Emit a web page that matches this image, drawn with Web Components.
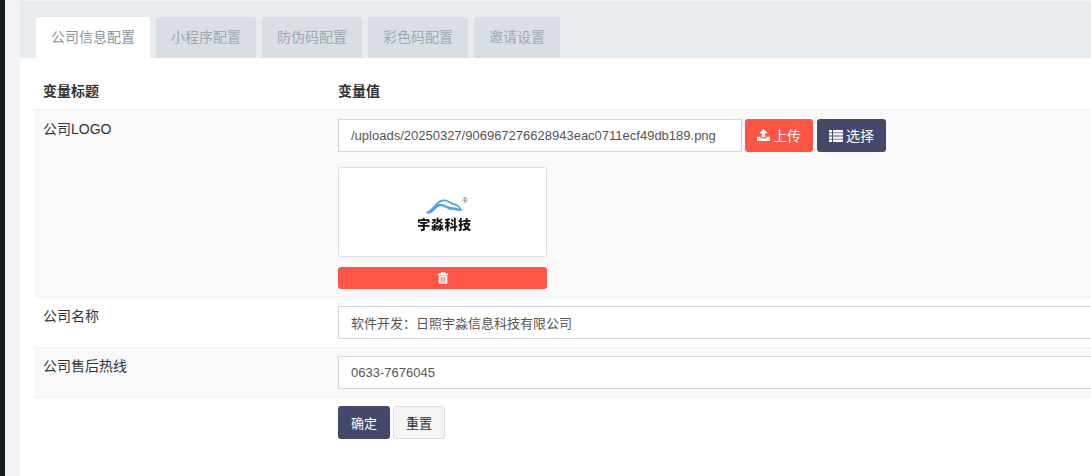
<!DOCTYPE html>
<html lang="zh">
<head>
<meta charset="utf-8">
<title>系统配置</title>
<style>
html, body { margin: 0; height: 100%; overflow: hidden; background: #f1f4f6; }
body { font: 14px "Liberation Sans", "Noto Sans CJK SC", sans-serif; color: #333; }
</style>
</head>
<body>
<config-page>
  <tab-bar slot="tabs">
    <tab-item active>公司信息配置</tab-item>
    <tab-item>小程序配置</tab-item>
    <tab-item>防伪码配置</tab-item>
    <tab-item>彩色码配置</tab-item>
    <tab-item>邀请设置</tab-item>
  </tab-bar>
  <config-row head>
    <span slot="label">变量标题</span>
    <span>变量值</span>
  </config-row>
  <config-row striped style="--row-height:186px;--row-border:0">
    <span slot="label">公司LOGO</span>
    <upload-field value="/uploads/20250327/906967276628943eac0711ecf49db189.png"></upload-field>
  </config-row>
  <config-row style="--row-height:50px">
    <span slot="label">公司名称</span>
    <text-field value="软件开发：日照宇淼信息科技有限公司"></text-field>
  </config-row>
  <config-row striped closing style="--row-height:51px">
    <span slot="label">公司售后热线</span>
    <text-field value="0633-7676045"></text-field>
  </config-row>
  <form-actions></form-actions>
</config-page>

<script>
// shared icons, drawn on a 14 unit box
const ICONS = {
  upload: '<path d="M7 0 11.4 4.6H8.9V9H5.1V4.6H2.6Z"/><path d="M0 8.4H3.9V10.3H10.1V8.4H14V13H0Z"/>',
  list: '<path d="M0 1H3V3.4H0ZM4 1H14V3.4H4ZM0 4.2H3V6.6H0ZM4 4.2H14V6.6H4ZM0 7.4H3V9.8H0ZM4 7.4H14V9.8H4ZM0 10.6H3V13H0ZM4 10.6H14V13H4Z"/>',
  trash: '<path d="M4.6 .4H9.4L10 2H13V3.4H1V2H4ZM2 4.2H12V13.6H2Z"/><path d="M4.4 5.6H5.4V12.2H4.4ZM6.5 5.6H7.5V12.2H6.5ZM8.6 5.6H9.6V12.2H8.6Z" fill="#ff5546"/>'
};

class ConfigPage extends HTMLElement {
  constructor() {
    super();
    this.attachShadow({ mode: "open" }).innerHTML = `
    <style>
      :host { display: flex; height: 476px; width: 1240px; background: #f0f4f7; }
      .rail { width: 5px; flex: none; background: #141d21; }
      .main { margin: 1px 0 0 15px; flex: 1; background: #fff; }
      .body { padding: 18px 0 0 15px; }
    </style>
    <div class="rail"></div>
    <div class="main">
      <slot name="tabs"></slot>
      <div class="body"><slot></slot></div>
    </div>`;
  }
}

class TabBar extends HTMLElement {
  constructor() {
    super();
    this.attachShadow({ mode: "open" }).innerHTML = `
    <style>
      :host { display: flex; gap: 6px; height: 41px; padding: 16px 0 0 16px; background: #e6ebee; }
    </style>
    <slot></slot>`;
  }
}

class TabItem extends HTMLElement {
  constructor() {
    super();
    this.attachShadow({ mode: "open" }).innerHTML = `
    <style>
      :host { display: block; padding: 0 15px; line-height: 41px; color: #a0a8ae; background: #d8dee3; border-radius: 3px 3px 0 0; }
      :host([active]) { background: #fff; color: #8b959c; }
    </style>
    <slot></slot>`;
  }
}

class ConfigRow extends HTMLElement {
  constructor() {
    super();
    this.attachShadow({ mode: "open" }).innerHTML = `
    <style>
      :host { display: grid; grid-template-columns: 295px 1fr; box-sizing: border-box; height: var(--row-height, 35px); padding: 8px 0 0 8px; border-top: var(--row-border, 1px) solid #f1f2f3; line-height: 20px; }
      :host([striped]) { background: #f9f9f9; }
      :host([closing]) { border-bottom: 1px solid #f1f2f3; }
      :host([head]) { border-top: 0; border-bottom: 2px solid #f1f2f3; padding-top: 5px; font-weight: bold; }
    </style>
    <div><slot name="label"></slot></div>
    <div><slot></slot></div>`;
  }
}

class TextField extends HTMLElement {
  constructor() {
    super();
    const root = this.attachShadow({ mode: "open" });
    root.innerHTML = `
    <style>
      :host { display: block; }
      input { display: block; box-sizing: border-box; width: 100%; height: 33px; margin: 0; padding: 0 12px; font: 13px "Liberation Sans", "Noto Sans CJK SC", sans-serif; color: #555; background: #fff; border: 1px solid #d2d6e2; border-radius: 0; outline: 0; }
    </style>
    <input type="text">`;
    root.querySelector("input").setAttribute("value", this.getAttribute("value") || "");
  }
}

class UiButton extends HTMLElement {
  constructor() {
    super();
    this.attachShadow({ mode: "open" }).innerHTML = `
    <style>
      :host { display: flex; align-items: center; justify-content: center; gap: 3px; box-sizing: border-box; height: 33px; padding: 0 12px; border-radius: 3px; color: #fff; background: #44496a; }
      :host([tone="danger"]) { background: #ff5546; }
      :host([tone="plain"]) { color: #333; background: #f4f4f4; border: 1px solid #ddd; }
      ::slotted(svg) { flex: none; fill: currentColor; }
    </style>
    <slot></slot>`;
  }
}

class UploadField extends HTMLElement {
  constructor() {
    super();
    const root = this.attachShadow({ mode: "open" });
    root.innerHTML = `
    <style>
      :host { display: block; }
      .top { display: flex; gap: 4px; }
      text-field { width: 404px; margin-right: -1px; }
      .thumb { box-sizing: border-box; width: 209px; height: 90px; margin-top: 15px; background: #fff; border: 1px solid #ddd; border-radius: 3px; display: flex; justify-content: center; align-items: center; }
      .del { width: 209px; height: 22px; margin-top: 10px; }
    </style>
    <div class="top">
      <text-field></text-field>
      <ui-button tone="danger"><svg viewBox="0 0 14 14" width="13" height="13">${ICONS.upload}</svg>上传</ui-button>
      <ui-button><svg viewBox="0 0 14 14" width="14" height="14">${ICONS.list}</svg>选择</ui-button>
    </div>
    <div class="thumb"><brand-logo></brand-logo></div>
    <ui-button class="del" tone="danger"><svg viewBox="0 0 14 14" width="12" height="12">${ICONS.trash}</svg></ui-button>`;
    root.querySelector("text-field").shadowRoot.querySelector("input").setAttribute("value", this.getAttribute("value"));
  }
}

// the logo is a small picture on its own canvas, so its parts sit at fixed spots
class BrandLogo extends HTMLElement {
  constructor() {
    super();
    this.attachShadow({ mode: "open" }).innerHTML = `
    <style>
      :host { display: block; position: relative; width: 56px; height: 40px; left: 2px; }
      svg { position: absolute; left: 9px; top: 6px; }
      .mark { position: absolute; left: 46px; top: 5px; font-size: 7px; line-height: 8px; color: #555; }
      .name { position: absolute; left: 0; top: 24px; width: 56px; text-align: center; white-space: nowrap; font: 900 13px/16px "Noto Sans CJK SC", serif; letter-spacing: .6px; color: #111; filter: blur(.35px); }
    </style>
    <svg width="36" height="16" viewBox="0 0 36 16" fill="none" stroke="#4aa3f2" stroke-linecap="round">
      <path d="M1 14.5C5 14 6 10 9 8C13 2 19 1 23 4C26 6 30 6 32 8C34 9 34 11 35 12" stroke-width="1.8"/>
      <path d="M3 14.5C8 13 9 8 13 7C17 6 20 9 23 10C26 11 29 10 33 12" stroke-width="2.4"/>
    </svg>
    <span class="mark">®</span>
    <span class="name">宇淼科技</span>`;
  }
}

class FormActions extends HTMLElement {
  constructor() {
    super();
    this.attachShadow({ mode: "open" }).innerHTML = `
    <style>
      :host { display: flex; gap: 3px; padding: 8px 0 0 303px; font-size: 13px; }
      ui-button { width: 52px; padding: 0; }
    </style>
    <ui-button>确定</ui-button>
    <ui-button tone="plain">重置</ui-button>`;
  }
}

customElements.define("config-page", ConfigPage);
customElements.define("tab-bar", TabBar);
customElements.define("tab-item", TabItem);
customElements.define("config-row", ConfigRow);
customElements.define("text-field", TextField);
customElements.define("ui-button", UiButton);
customElements.define("upload-field", UploadField);
customElements.define("brand-logo", BrandLogo);
customElements.define("form-actions", FormActions);
</script>
</body>
</html>
